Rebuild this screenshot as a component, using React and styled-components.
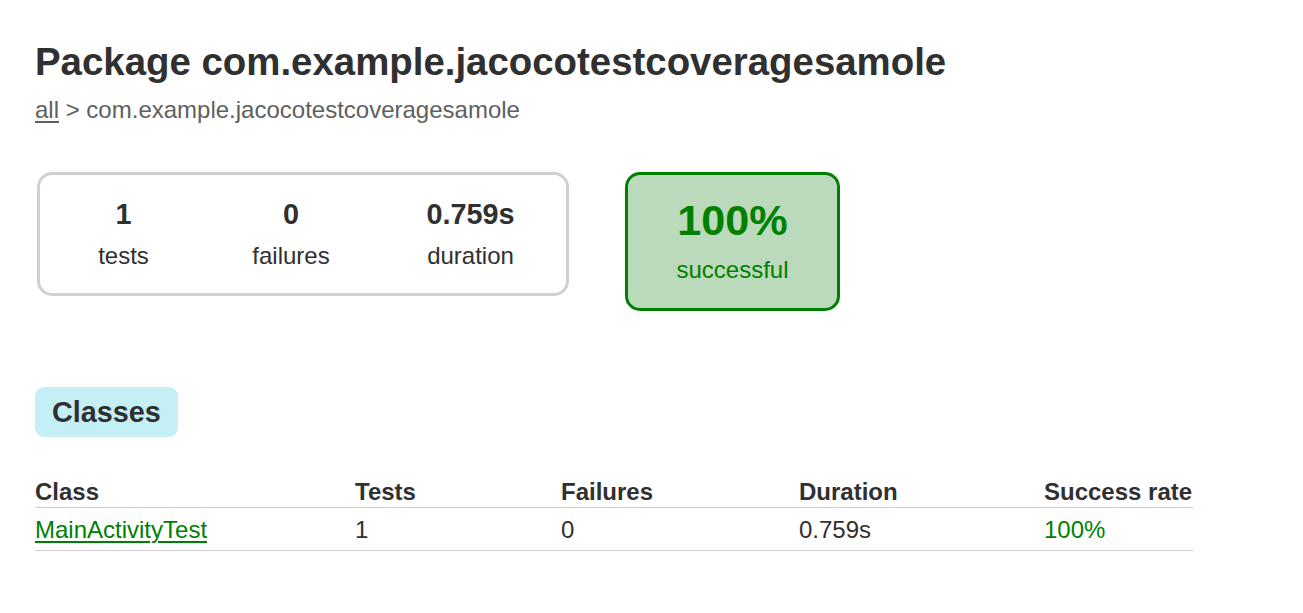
import styled, { createGlobalStyle } from "styled-components";

const GlobalStyle = createGlobalStyle`
  body {
    margin: 0;
    padding: 0;
    background: #ffffff;
    font-family: "Liberation Sans", Arial, sans-serif;
    font-size: 24px;
    color: #303030;
  }
`;

const Content = styled.div`
  padding: 40px 35px 40px 35px;
`;

const Title = styled.h1`
  margin: 0;
  font-size: 38.4px;
  line-height: 44px;
  font-weight: bold;
  white-space: nowrap;
`;

const Breadcrumbs = styled.div`
  margin-top: 12px;
  line-height: 27px;
  color: #606060;

  a {
    color: #606060;
    text-decoration-thickness: 2px;
    text-underline-offset: 3px;
  }
`;

const Summary = styled.div`
  display: flex;
  align-items: flex-start;
  gap: 56px;
  margin-top: 49px;
  margin-left: 2px;
`;

const SummaryGroup = styled.div`
  display: grid;
  grid-template-columns: 167px 168px 191px;
  width: 532px;
  box-sizing: border-box;
  padding: 23px 0 24px;
  border: 3px solid #d0d0d0;
  border-radius: 15px;
`;

const InfoBox = styled.div`
  text-align: center;
`;

const Counter = styled.div`
  font-size: ${(p) => (p.$big ? "43.2px" : "28.8px")};
  line-height: ${(p) => (p.$big ? "48px" : "33px")};
  font-weight: bold;
  margin-bottom: ${(p) => (p.$big ? "12px" : "11px")};
`;

const Label = styled.div`
  line-height: 27px;
`;

const SuccessRate = styled.div`
  width: 215px;
  box-sizing: border-box;
  padding: 21px 0 25px;
  text-align: center;
  color: #008000;
  background-color: #bbd9bb;
  border: 3px solid #008000;
  border-radius: 15px;
`;

const TabLabel = styled.h2`
  display: inline-block;
  margin: 76px 0 0;
  padding: 8px 17px;
  font-size: 28.8px;
  line-height: 34px;
  font-weight: bold;
  background-color: #c4eff5;
  border-radius: 9px;
`;

const Table = styled.table`
  margin-top: 41px;
  border-collapse: collapse;
  width: 1158px;
  table-layout: fixed;
`;

const Th = styled.th`
  text-align: left;
  font-weight: bold;
  padding: 0 0 2px;
  line-height: 27px;
  width: ${(p) => p.$w}px;
  border-bottom: 1.5px solid #d0d0d0;
`;

const Td = styled.td`
  padding: 8px 0 7px;
  line-height: 27px;
  color: ${(p) => (p.$success ? "#008000" : "#303030")};
  border-bottom: 1.5px solid #d0d0d0;

  a {
    color: #008000;
    text-decoration-thickness: 2px;
    text-underline-offset: 3px;
  }
`;

const columns = [
  { name: "Class", w: 320 },
  { name: "Tests", w: 206 },
  { name: "Failures", w: 238 },
  { name: "Duration", w: 245 },
  { name: "Success rate", w: 149 },
];

const stats = [
  { value: "1", label: "tests" },
  { value: "0", label: "failures" },
  { value: "0.759s", label: "duration" },
];

export default function App() {
  return (
    <>
      <GlobalStyle />
      <Content>
        <Title>Package com.example.jacocotestcoveragesamole</Title>
        <Breadcrumbs>
          <a href="#">all</a> &gt; com.example.jacocotestcoveragesamole
        </Breadcrumbs>
        <Summary>
          <SummaryGroup>
            {stats.map((s) => (
              <InfoBox key={s.label}>
                <Counter>{s.value}</Counter>
                <Label>{s.label}</Label>
              </InfoBox>
            ))}
          </SummaryGroup>
          <SuccessRate>
            <Counter $big>100%</Counter>
            <Label>successful</Label>
          </SuccessRate>
        </Summary>
        <TabLabel>Classes</TabLabel>
        <Table>
          <thead>
            <tr>
              {columns.map((c) => (
                <Th key={c.name} $w={c.w}>
                  {c.name}
                </Th>
              ))}
            </tr>
          </thead>
          <tbody>
            <tr>
              <Td>
                <a href="#">MainActivityTest</a>
              </Td>
              <Td>1</Td>
              <Td>0</Td>
              <Td>0.759s</Td>
              <Td $success>100%</Td>
            </tr>
          </tbody>
        </Table>
      </Content>
    </>
  );
}
